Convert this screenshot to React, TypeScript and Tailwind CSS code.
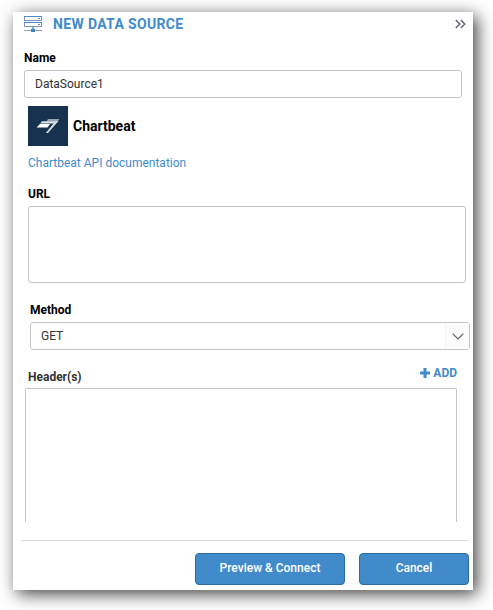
import { useState } from "react";

function ServerIcon() {
  return (
    <svg width="20" height="18" viewBox="0 0 20 18" fill="none" aria-hidden="true">
      <rect x="0.5" y="1.5" width="17" height="4" stroke="#7b93c8" />
      <rect x="0.5" y="7.5" width="17" height="4" stroke="#7b93c8" />
      <path d="M0 1.5h18M0 7.5h18" stroke="#4f89cc" />
      <path d="M14 3.5h2M14 9.5h2" stroke="#7d7fb5" />
      <path d="M0 15.5h18" stroke="#8ea0d0" />
      <path d="M9 12v2" stroke="#428bca" strokeWidth="1.4" />
      <path d="M7 14h4v3H7z" fill="#3f7fc4" />
    </svg>
  );
}

function ChartbeatLogo() {
  return (
    <svg width="40" height="40" viewBox="0 0 40 40" aria-hidden="true">
      <rect width="40" height="40" fill="#16324f" />
      <path d="M20 13h11.5l-2 2.6H18.5z" fill="#93a3b1" />
      <path d="M14 15.2h14.5l-1.5 2.3H12.2z" fill="#dfe5ea" />
      <path d="M12 18h10l-2.5 3.4H8.5z" fill="#ffffff" />
      <path d="M27.5 15h3L20 27h-2.2z" fill="#d5dce2" />
    </svg>
  );
}

export default function App() {
  const [name, setName] = useState("DataSource1");
  const [url, setUrl] = useState("");

  return (
    <div className="overflow-hidden bg-white pt-3 pr-5 pb-5 pl-[13px] font-['Roboto','Liberation_Sans',sans-serif] text-xs leading-4 text-black">
      <form
        className="bg-white shadow-[4px_4px_16px_rgba(0,0,0,0.75)]"
        onSubmit={(e) => e.preventDefault()}
      >
        <header className="flex h-6 items-center pr-[7px] pl-[11px]">
          <ServerIcon />
          <h1 className="ml-[9px] text-sm font-bold tracking-wide text-[#428bca]">NEW DATA SOURCE</h1>
          <button type="button" aria-label="Collapse panel" className="ml-auto">
            <svg width="11" height="10" viewBox="0 0 11 10" fill="none" stroke="#555b6b" strokeWidth="1.3">
              <path d="M0.8 1l4 4-4 4M5.8 1l4 4-4 4" />
            </svg>
          </button>
        </header>

        <div className="px-[11px] pt-[14px]">
          <label htmlFor="name" className="block font-bold">Name</label>
          <input
            id="name"
            value={name}
            onChange={(e) => setName(e.target.value)}
            className="mt-1 block h-7 w-full rounded-[3px] border border-[#c4c4c4] bg-white px-[10px] text-[#333]"
          />
        </div>

        <div className="pt-2 pr-[7px] pl-[15px]">
          <div className="flex items-center gap-[5px]">
            <ChartbeatLogo />
            <h2 className="text-sm font-bold">Chartbeat</h2>
          </div>
          <a href="#docs" className="mt-[9px] block text-[#428bca]">Chartbeat API documentation</a>
          <label htmlFor="url" className="mt-[15px] block font-bold">URL</label>
          <textarea
            id="url"
            value={url}
            onChange={(e) => setUrl(e.target.value)}
            className="mt-1 block h-[77px] w-full resize-none rounded-[3px] border border-[#c4c4c4] bg-white px-[10px] py-1 text-[#333]"
          />
        </div>

        <div className="pt-[19px] pr-[3px] pl-[17px]">
          <label htmlFor="method" className="block font-bold">Method</label>
          <div className="mt-1 grid">
            <select
              id="method"
              defaultValue="GET"
              className="col-start-1 row-start-1 h-7 w-full appearance-none rounded-[3px] border border-[#c4c4c4] bg-white px-[10px] text-[#333]"
            >
              <option>GET</option>
              <option>POST</option>
            </select>
            <span className="pointer-events-none col-start-1 row-start-1 m-px flex w-6 items-center justify-center justify-self-end rounded-r-[2px] border-l border-[#f6f6f6] bg-[#fbfbfb]">
              <svg width="12" height="7" viewBox="0 0 12 7" fill="none" stroke="#5c6170" strokeWidth="1.2">
                <path d="M0.7 0.7l5.3 5.3 5.3-5.3" />
              </svg>
            </span>
          </div>
        </div>

        <section aria-labelledby="headers" className="pt-[15px] pr-4 pl-3">
          <div className="flex items-start justify-between pl-[3px]">
            <h3 id="headers" className="mt-1 font-bold text-[#333]">Header(s)</h3>
            <button type="button" className="flex items-center gap-[3px] font-bold text-[#428bca]">
              <svg width="10" height="10" viewBox="0 0 10 10" fill="currentColor" aria-hidden="true">
                <path d="M3.5 0h3v3.5H10v3H6.5V10h-3V6.5H0v-3h3.5z" />
              </svg>
              ADD
            </button>
          </div>
          <div className="mt-[3px] h-[134px] rounded-t-[2px] border border-b-0 border-[#c4c4c4]" />
        </section>

        <footer className="pt-[18px] pr-1 pb-[5px] pl-2">
          <hr className="mr-px border-[#d9d9d9]" />
          <div className="mt-3 flex justify-end gap-[14px]">
            <button type="submit" className="h-8 w-[150px] rounded-[4px] border border-[#2d6ca2] bg-[#428bca] pb-[2px] font-medium text-white">
              Preview &amp; Connect
            </button>
            <button type="button" className="h-8 w-[110px] rounded-[4px] border border-[#2d6ca2] bg-[#428bca] pb-[2px] font-medium text-white">
              Cancel
            </button>
          </div>
        </footer>
      </form>
    </div>
  );
}
